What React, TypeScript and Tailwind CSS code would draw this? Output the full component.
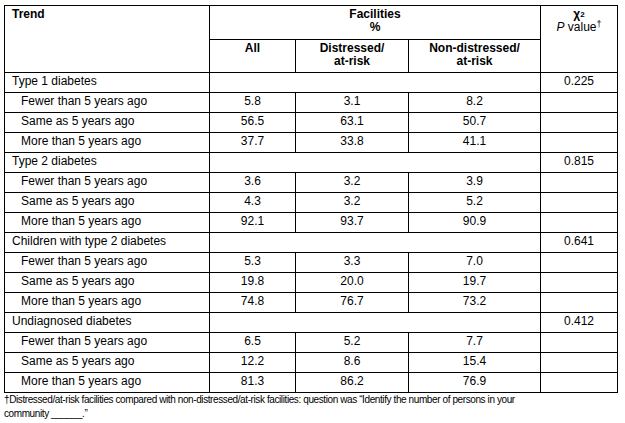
import React from 'react';

type Row = { label: string; group?: boolean; all?: string; dis?: string; non?: string; p?: string };

const sections = [
  { title: 'Type 1 diabetes', p: '0.225', rows: [['Fewer than 5 years ago', '5.8', '3.1', '8.2'], ['Same as 5 years ago', '56.5', '63.1', '50.7'], ['More than 5 years ago', '37.7', '33.8', '41.1']] },
  { title: 'Type 2 diabetes', p: '0.815', rows: [['Fewer than 5 years ago', '3.6', '3.2', '3.9'], ['Same as 5 years ago', '4.3', '3.2', '5.2'], ['More than 5 years ago', '92.1', '93.7', '90.9']] },
  { title: 'Children with type 2 diabetes', p: '0.641', rows: [['Fewer than 5 years ago', '5.3', '3.3', '7.0'], ['Same as 5 years ago', '19.8', '20.0', '19.7'], ['More than 5 years ago', '74.8', '76.7', '73.2']] },
  { title: 'Undiagnosed diabetes', p: '0.412', rows: [['Fewer than 5 years ago', '6.5', '5.2', '7.7'], ['Same as 5 years ago', '12.2', '8.6', '15.4'], ['More than 5 years ago', '81.3', '86.2', '76.9']] },
];

const rows: Row[] = sections.flatMap((s) => [
  { label: s.title, group: true, p: s.p },
  ...s.rows.map(([label, all, dis, non]) => ({ label, all, dis, non })),
]);

const cell = 'border border-black h-[20px] p-0 align-top leading-[14px] pt-[1px]';

export default function App() {
  return (
    <div className="bg-white w-[625px] h-[423px] pt-[5px] pl-[4px] text-black text-[12px]" style={{ fontFamily: '"Liberation Sans", Arial, sans-serif' }}>
      <table className="border-collapse table-fixed w-[613px]">
        <colgroup>
          <col className="w-[205px]" />
          <col className="w-[86px]" />
          <col className="w-[113px]" />
          <col className="w-[132px]" />
          <col className="w-[77px]" />
        </colgroup>
        <thead>
          <tr className="h-[34px]">
            <th rowSpan={2} className="border border-black align-top text-left font-bold leading-[13px] pt-[2px] pl-[7px]">Trend</th>
            <th colSpan={3} className="border border-black align-top font-bold leading-[13px] pt-[2px]">
              Facilities
              <br />
              %
            </th>
            <th rowSpan={2} className="border border-black align-top font-normal leading-[13px] pt-[2px]">
              <span className="font-bold">
                χ<sup className="text-[8px] relative top-[-1px]">2</sup>
              </span>
              <br />
              <i>P</i> value<sup className="text-[9px]">†</sup>
            </th>
          </tr>
          <tr className="h-[33px]">
            <th className="border border-black align-top font-bold leading-[13px] pt-[2px]">All</th>
            <th className="border border-black align-top font-bold leading-[13px] pt-[2px]">
              Distressed/
              <br />
              at-risk
            </th>
            <th className="border border-black align-top font-bold leading-[13px] pt-[2px]">
              Non-distressed/
              <br />
              at-risk
            </th>
          </tr>
        </thead>
        <tbody>
          {rows.map((r, i) =>
            r.group ? (
              <tr key={i}>
                <td className={`${cell} pl-[7px]`}>{r.label}</td>
                <td colSpan={3} className={cell}></td>
                <td className={`${cell} text-center`}>{r.p}</td>
              </tr>
            ) : (
              <tr key={i}>
                <td className={`${cell} pl-[16px]`}>{r.label}</td>
                <td className={`${cell} text-center`}>{r.all}</td>
                <td className={`${cell} text-center`}>{r.dis}</td>
                <td className={`${cell} text-center`}>{r.non}</td>
                <td className={cell}></td>
              </tr>
            )
          )}
        </tbody>
      </table>
      <p className="w-[540px] text-[10px] leading-[14px] tracking-[-0.4px]">
        †Distressed/at-risk facilities compared with non-distressed/at-risk facilities: question was “Identify the number of persons in your community ______.”
      </p>
    </div>
  );
}
